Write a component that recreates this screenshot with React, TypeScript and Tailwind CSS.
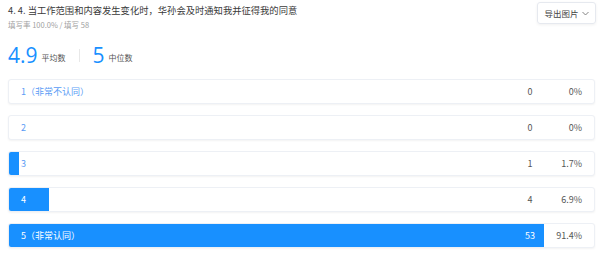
import React from "react";

const rows = [
  { label: "1（非常不认同）", count: 0, pct: "0%", w: 0 },
  { label: "2", count: 0, pct: "0%", w: 0 },
  { label: "3", count: 1, pct: "1.7%", w: 1.7 },
  { label: "4", count: 4, pct: "6.9%", w: 6.9 },
  { label: "5（非常认同）", count: 53, pct: "91.4%", w: 91.4 },
];

export default function App() {
  return (
    <div className="w-[605px] h-[260px] bg-white font-['Noto_Sans_CJK_SC','Noto_Sans',sans-serif] overflow-hidden">
      <div className="flex justify-between pl-2 pr-[9px] pt-[2px]">
        <div className="pt-[1px]">
          <div className="text-[9.3px] leading-[14px] text-[#3a3a3a]">4. 4. 当工作范围和内容发生变化时，华孙会及时通知我并征得我的同意</div>
          <div className="text-[7.5px] leading-[12px] text-[#a0a0a0] mt-[2px]">填写率 100.0% / 填写 58</div>
        </div>
        <div className="h-[22px] w-[59px] border border-[#e6e9ef] rounded-[3px] shadow-[0_1px_3px_rgba(0,0,0,0.06)] flex items-center justify-center gap-[3px] text-[8.5px] text-[#444]">
          <span>导出图片</span>
          <svg width="7" height="5" viewBox="0 0 7 5" fill="none"><path d="M0.5 1 L3.5 4 L6.5 1" stroke="#777" strokeWidth="0.9" /></svg>
        </div>
      </div>
      <div className="flex items-center pl-2 mt-[15px] h-[18px]">
        <span className="text-[21px] leading-none text-[#1890ff] font-['Open_Sans',sans-serif]">4.9</span>
        <span className="text-[8px] text-[#555] ml-[4px] mt-[5px]">平均数</span>
        <span className="w-px h-[13px] bg-[#e8e8e8] ml-[13px] mr-[13px]" />
        <span className="text-[21px] leading-none text-[#1890ff] font-['Open_Sans',sans-serif]">5</span>
        <span className="text-[8px] text-[#555] ml-[4px] mt-[5px]">中位数</span>
      </div>
      <div className="flex flex-col gap-[11px] pl-2 pr-[10px] mt-[15px]">
        {rows.map((r) => (
          <div key={r.label} className="relative h-[25px] rounded-[3px] border border-[#edf0f5] shadow-[0_1px_2px_rgba(0,0,0,0.05)] overflow-hidden bg-white">
            <div className="absolute left-0 top-0 bottom-0 bg-[#1890ff]" style={{ width: `${r.w}%` }} />
            <div className="relative flex items-center h-full text-[9px]">
              <span className={`pl-[12px] flex-1 ${r.w > 5 ? "text-white" : "text-[#5a9cf5]"}`}>{r.label}</span>
              <span className={`w-[20px] text-center ${r.w > 80 ? "text-white" : "text-[#555]"}`}>{r.count}</span>
              <span className="w-[54px] text-right pr-[12px] text-[#555]">{r.pct}</span>
            </div>
          </div>
        ))}
      </div>
    </div>
  );
}
